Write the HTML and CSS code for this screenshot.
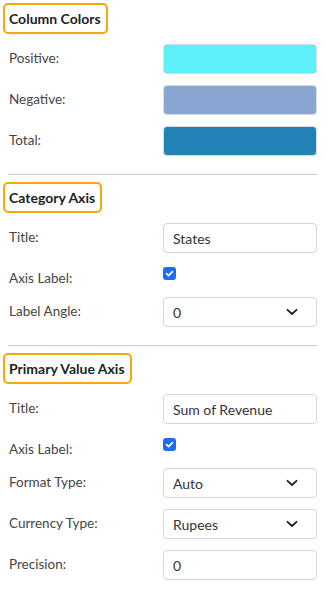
FILE: index.html
```html
<!DOCTYPE html>
<html lang="en">
<head>
    <meta charset="UTF-8">
    <meta name="viewport" content="width=device-width, initial-scale=1.0">
    <title>Chart Properties</title>
    <link rel="stylesheet" href="styles.css">
</head>
<body>
    <div class="panel">
        <div class="section">
            <div class="section-title">Column Colors</div>
            <div class="row">
                <span class="label">Positive:</span>
                <div class="swatch positive"></div>
            </div>
            <div class="row">
                <span class="label">Negative:</span>
                <div class="swatch negative"></div>
            </div>
            <div class="row">
                <span class="label">Total:</span>
                <div class="swatch total"></div>
            </div>
        </div>
        <hr class="divider">

        <div class="section">
            <div class="section-title">Category Axis</div>
            <div class="row">
                <span class="label">Title:</span>
                <input class="field" type="text" value="States">
            </div>
            <div class="row check-row">
                <span class="label">Axis Label:</span>
                <span class="checkbox">
                    <svg width="13" height="13" viewBox="0 0 13 13"><rect width="13" height="13" rx="3" fill="#1a6ff0"/><path d="M3.6 6.7 L5.6 8.6 L9.4 4.6" fill="none" stroke="#fff" stroke-width="1.7" stroke-linecap="round" stroke-linejoin="round"/></svg>
                </span>
            </div>
            <div class="row">
                <span class="label">Label Angle:</span>
                <div class="select">
                    <span>0</span>
                    <svg class="chevron" width="12" height="8" viewBox="0 0 12 8"><path d="M1.5 1.8 L6 6 L10.5 1.8" fill="none" stroke="#222" stroke-width="1.8" stroke-linecap="round" stroke-linejoin="round"/></svg>
                </div>
            </div>
        </div>
        <hr class="divider">

        <div class="section">
            <div class="section-title">Primary Value Axis</div>
            <div class="row">
                <span class="label">Title:</span>
                <input class="field" type="text" value="Sum of Revenue">
            </div>
            <div class="row check-row">
                <span class="label">Axis Label:</span>
                <span class="checkbox">
                    <svg width="13" height="13" viewBox="0 0 13 13"><rect width="13" height="13" rx="3" fill="#1a6ff0"/><path d="M3.6 6.7 L5.6 8.6 L9.4 4.6" fill="none" stroke="#fff" stroke-width="1.7" stroke-linecap="round" stroke-linejoin="round"/></svg>
                </span>
            </div>
            <div class="row">
                <span class="label">Format Type:</span>
                <div class="select">
                    <span>Auto</span>
                    <svg class="chevron" width="12" height="8" viewBox="0 0 12 8"><path d="M1.5 1.8 L6 6 L10.5 1.8" fill="none" stroke="#222" stroke-width="1.8" stroke-linecap="round" stroke-linejoin="round"/></svg>
                </div>
            </div>
            <div class="row">
                <span class="label">Currency Type:</span>
                <div class="select">
                    <span>Rupees</span>
                    <svg class="chevron" width="12" height="8" viewBox="0 0 12 8"><path d="M1.5 1.8 L6 6 L10.5 1.8" fill="none" stroke="#222" stroke-width="1.8" stroke-linecap="round" stroke-linejoin="round"/></svg>
                </div>
            </div>
            <div class="row">
                <span class="label">Precision:</span>
                <input class="field" type="text" value="0">
            </div>
        </div>
    </div>
</body>
</html>
```

FILE: styles.css
```css
:root {
    --accent: #f5a70e;
    --text-dark: #222;
    --text: #444;
    --border-color: #d3d6da;
}

body {
    margin: 0;
    padding: 0;
    background-color: white;
    font-family: Lato, 'Open Sans', sans-serif;
    font-size: 13.5px;
    color: var(--text);
}

.panel {
    padding: 3px 10px 0 3px;
}

.section {
    padding-bottom: 18px;
}

.section-title {
    display: inline-block;
    box-sizing: border-box;
    height: 31px;
    line-height: 27px;
    padding: 0 5px 0 4px;
    border: 2px solid var(--accent);
    border-radius: 5px;
    font-weight: bold;
    font-size: 14px;
    color: var(--text-dark);
}

.divider {
    border: none;
    border-top: 1px solid #cfcfcf;
    margin: 0 0 7px 5px;
}

.row {
    display: flex;
    align-items: center;
    height: 30px;
    margin-top: 11px;
}

.section-title + .row {
    margin-top: 10px;
}

.label {
    width: 160px;
    padding-left: 6px;
    box-sizing: border-box;
    flex-shrink: 0;
    margin-top: -2px;
}

.check-row {
    height: 22px;
    align-items: flex-start;
}

.check-row .label {
    margin-top: 6px;
}

.checkbox {
    display: block;
    width: 13px;
    height: 13px;
    margin-top: 3px;
}

.checkbox svg {
    display: block;
}

.swatch {
    flex: 1;
    height: 30px;
    box-sizing: border-box;
    border: 1px solid #d8dbe0;
    border-radius: 4px;
}

.swatch.positive {
    background-color: #5cf0f9;
}

.swatch.negative {
    background-color: #88a6d1;
}

.swatch.total {
    background-color: #2382b6;
}

.field,
.select {
    flex: 1;
    min-width: 0;
    height: 30px;
    box-sizing: border-box;
    border: 1px solid var(--border-color);
    border-radius: 4px;
    padding: 0 9px;
    font-family: inherit;
    font-size: 14px;
    color: #333;
    background-color: white;
}

.select {
    display: flex;
    align-items: center;
    justify-content: space-between;
    padding-right: 18px;
}

.chevron {
    display: block;
}
```
